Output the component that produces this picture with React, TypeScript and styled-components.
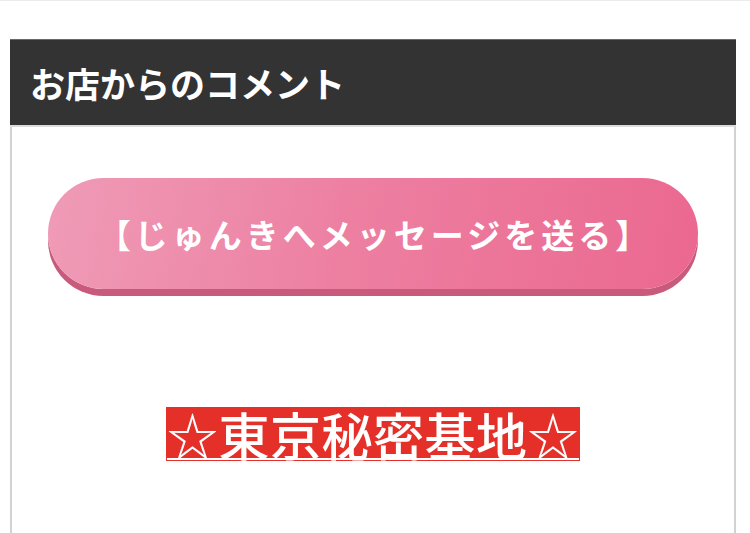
import styled, { createGlobalStyle } from 'styled-components';

const GlobalStyle = createGlobalStyle`
  html, body {
    margin: 0;
    padding: 0;
    background: #ffffff;
  }
  body {
    font-family: "Noto Sans CJK JP", "Noto Sans", sans-serif;
    border-top: 1px solid #ececec;
  }
`;

const Panel = styled.section`
  margin: 38px 14px 0 10px;
  display: flex;
  flex-direction: column;
`;

const Header = styled.h2`
  margin: 0;
  height: 85px;
  background: #333333;
  border-top: 1px solid #6a6a6a;
  border-bottom: 2px solid #dcdcdc;
  color: #ffffff;
  font-size: 35px;
  font-weight: 700;
  display: flex;
  align-items: center;
  padding-left: 20px;
`;

const Body = styled.div`
  border-left: 2px solid #d2d2d2;
  border-right: 2px solid #d2d2d2;
  padding: 51px 0 80px;
  display: flex;
  flex-direction: column;
  align-items: center;
  gap: 118px;
`;

const MessageButton = styled.a`
  box-sizing: border-box;
  width: 90%;
  height: 111px;
  border-radius: 56px;
  background: linear-gradient(100deg, #ef9bb7 0%, #ed80a2 45%, #eb6890 100%);
  box-shadow: 0 7px 0 #c85a7c;
  color: #ffffff;
  font-size: 33px;
  font-weight: 600;
  letter-spacing: 4px;
  padding-left: 4px;
  display: flex;
  align-items: center;
  justify-content: center;
  text-decoration: none;
  cursor: pointer;
`;

const ShopLink = styled.a`
  display: inline-block;
  height: 54px;
  line-height: 54px;
  padding: 0 1px;
  background: #e5302a;
  color: #ffffff;
  font-size: 51px;
  font-weight: 500;
  letter-spacing: 0.5px;
  text-decoration: underline;
  text-decoration-thickness: 2px;
  text-underline-offset: 2px;
`;

export default function App() {
  return (
    <>
      <GlobalStyle />
      <Panel>
        <Header>お店からのコメント</Header>
        <Body>
          <MessageButton>【じゅんきへメッセージを送る】</MessageButton>
          <ShopLink>☆東京秘密基地☆</ShopLink>
        </Body>
      </Panel>
    </>
  );
}
